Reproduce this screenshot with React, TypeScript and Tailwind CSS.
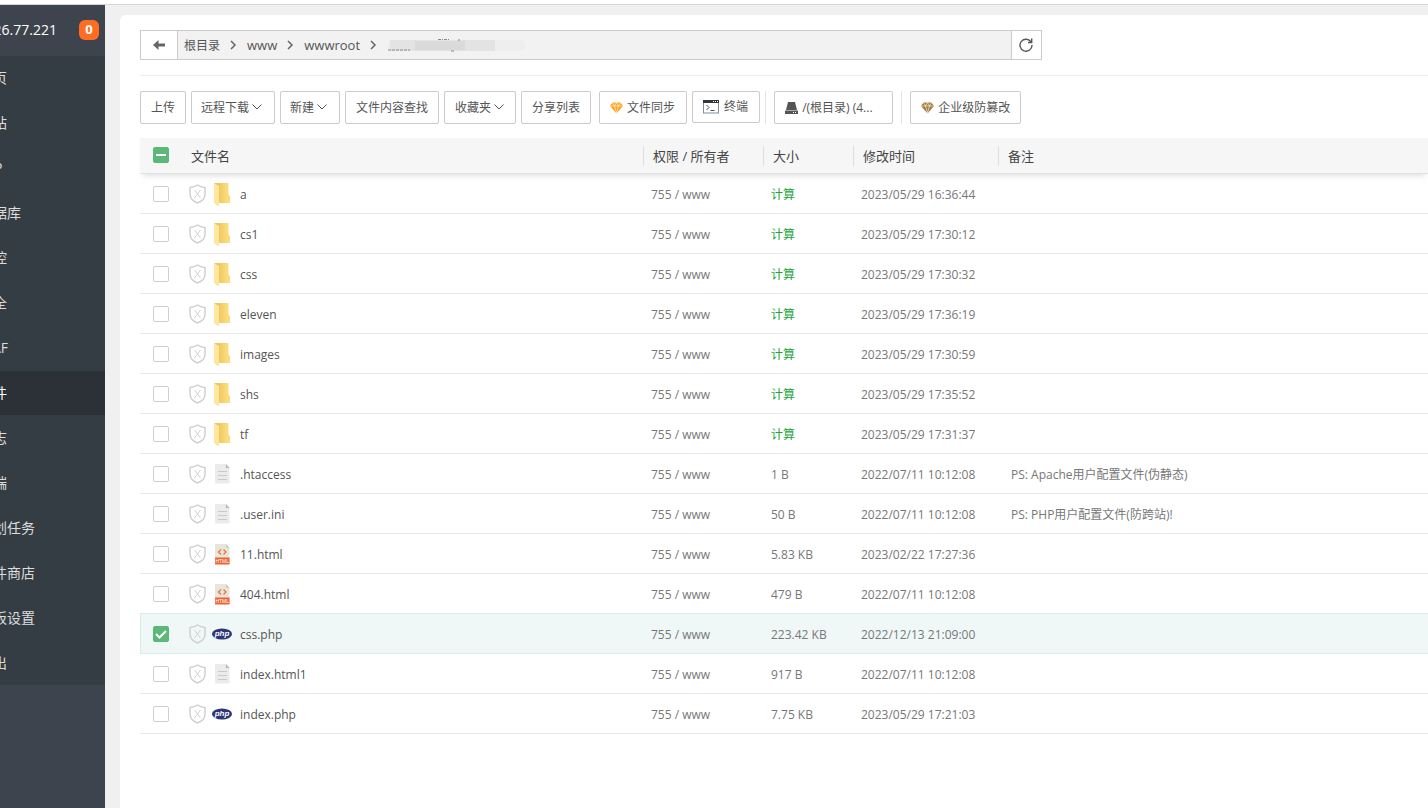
import type React from 'react';

type FileKind = 'folder' | 'text' | 'html' | 'php';

interface FileRow {
  name: string;
  kind: FileKind;
  size?: string;
  time: string;
  remark?: string;
  selected?: boolean;
}

const menu = [
  '首页', '网站', 'FTP', '数据库', '监控', '安全', 'WAF',
  '文件', '日志', '终端', '计划任务', '软件商店', '面板设置', '退出',
];

const files: FileRow[] = [
  { name: 'a', kind: 'folder', time: '2023/05/29 16:36:44' },
  { name: 'cs1', kind: 'folder', time: '2023/05/29 17:30:12' },
  { name: 'css', kind: 'folder', time: '2023/05/29 17:30:32' },
  { name: 'eleven', kind: 'folder', time: '2023/05/29 17:36:19' },
  { name: 'images', kind: 'folder', time: '2023/05/29 17:30:59' },
  { name: 'shs', kind: 'folder', time: '2023/05/29 17:35:52' },
  { name: 'tf', kind: 'folder', time: '2023/05/29 17:31:37' },
  { name: '.htaccess', kind: 'text', size: '1 B', time: '2022/07/11 10:12:08', remark: 'PS: Apache用户配置文件(伪静态)' },
  { name: '.user.ini', kind: 'text', size: '50 B', time: '2022/07/11 10:12:08', remark: 'PS: PHP用户配置文件(防跨站)!' },
  { name: '11.html', kind: 'html', size: '5.83 KB', time: '2023/02/22 17:27:36' },
  { name: '404.html', kind: 'html', size: '479 B', time: '2022/07/11 10:12:08' },
  { name: 'css.php', kind: 'php', size: '223.42 KB', time: '2022/12/13 21:09:00', selected: true },
  { name: 'index.html1', kind: 'text', size: '917 B', time: '2022/07/11 10:12:08' },
  { name: 'index.php', kind: 'php', size: '7.75 KB', time: '2023/05/29 17:21:03' },
];

const Shield: React.FC = () => (
  <svg width="17" height="20" viewBox="0 0 17 20" fill="none" stroke="#d0d0d0">
    <path d="M8.500 1C6.500 2.600 4 3.300 1 3.400V10c0 4.200 3 7.300 7.500 9 4.500-1.700 7.500-4.800 7.500-9V3.400C13 3.300 10.500 2.600 8.500 1Z" strokeWidth="1.500" strokeLinejoin="round" />
    <path d="m5.500 6 6 8M11.500 6l-6 8" strokeWidth="1" />
  </svg>
);

const FileIcon: React.FC<{ kind: FileKind }> = ({ kind }) => {
  if (kind === 'folder') {
    return (
      <svg width="20" height="24" viewBox="0 0 20 24">
        <defs>
          <linearGradient id="folderBack" x1="0" x2="1">
            <stop offset="0.200" stopColor="#ebc45c" />
            <stop offset="0.800" stopColor="#fbdb7c" />
          </linearGradient>
        </defs>
        <path d="M2 1h14.500v11.500l1.500 2v6.500H6Z" fill="url(#folderBack)" />
        <path d="M2 1l5 3v21l-5-4Z" fill="#ffe69c" />
      </svg>
    );
  }
  if (kind === 'php') {
    return (
      <svg width="20" height="12" viewBox="0 0 20 12">
        <ellipse cx="10" cy="6" rx="10" ry="5.600" fill="#2c3578" />
        <text x="10" y="8" textAnchor="middle" fontSize="8" fontWeight="bold" fontStyle="italic" fontFamily="Liberation Sans, sans-serif" fill="#fff">php</text>
      </svg>
    );
  }
  const html = kind === 'html';
  return (
    <svg width="16" height="22" viewBox="0 0 16 22">
      <path d="M1 1h11l3.500 4v15.500H1Z" fill={html ? '#e8e6da' : '#ebebeb'} />
      <path d="M12 1v4h3.500Z" fill={html ? '#cfcdbf' : '#b8b8b8'} />
      {html ? (
        <>
          <path d="M7 6.500 4.500 9 7 11.500M9.500 6.500 12 9l-2.500 2.500" fill="none" stroke="#ef6c3a" strokeWidth="1.200" />
          <rect x="1" y="14.500" width="14.500" height="7" fill="#ee6334" />
          <text x="8.250" y="20" textAnchor="middle" fontSize="5" fontFamily="Liberation Sans, sans-serif" fill="#fff">HTML</text>
        </>
      ) : (
        <path d="M4 8.500h9M4 12.500h9M4 16.500h9" stroke="#c9c9c9" />
      )}
    </svg>
  );
};

const Checkbox: React.FC<{ label: string; checked?: boolean; partial?: boolean }> = ({ label, checked, partial }) => (
  <label className="relative block size-4">
    <input
      type="checkbox"
      aria-label={label}
      defaultChecked={checked || partial}
      className="peer block size-4 appearance-none rounded-xs border border-[#cfcfcf] bg-white checked:border-[#5cb878] checked:bg-[#5cb878]"
    />
    <svg
      className="pointer-events-none absolute inset-0 hidden peer-checked:block"
      width="16" height="16" viewBox="0 0 16 16" fill="none" stroke="#fff" strokeWidth="2"
    >
      <path d={partial ? 'M3 8h10' : 'm3 8 3.500 3.500L13 5'} />
    </svg>
  </label>
);

const ToolButton: React.FC<{ children: React.ReactNode; arrow?: boolean; className?: string }> = ({
  children,
  arrow,
  className = 'h-[33px] px-[10px]',
}) => (
  <button
    type="button"
    className={`flex shrink-0 items-center rounded-xs border border-[#cbcbcb] bg-white text-xs whitespace-nowrap ${className}`}
  >
    {children}
    {arrow && (
      <svg className="ml-[3px]" width="10" height="7" viewBox="0 0 10 7" fill="none" stroke="#555">
        <path d="m.5.5 4.500 4.500L9.500.5" />
      </svg>
    )}
  </button>
);

const Diamond: React.FC<{ color: string }> = ({ color }) => (
  <svg className="mr-1" width="13" height="12" viewBox="0 0 13 12">
    <path d="M2.500.5h8L13 4 6.500 11.500 0 4Z" fill={color} />
    <path d="M0 4h13M4.500 4l2 7M8.500 4l-2 7M2.500.5l2 3.500 2-3.500 2 3.500 2-3.500" fill="none" stroke="#fff" strokeWidth=".6" />
  </svg>
);

const Crumb: React.FC<{ children: React.ReactNode }> = ({ children }) => (
  <>
    <a href="#" className="pt-0.5 text-[#555]">{children}</a>
    <svg className="mx-[10px]" width="7" height="10" viewBox="0 0 7 10" fill="none" stroke="#666" strokeWidth="1.500">
      <path d="m1 1 4 4-4 4" />
    </svg>
  </>
);

const HeadCell: React.FC<{ children: React.ReactNode }> = ({ children }) => (
  <th className="border-b border-[#e0e0e0] p-0 text-left font-normal">
    <div className="h-5 border-l border-[#dedede] pl-[9px] leading-5">{children}</div>
  </th>
);

const Sidebar: React.FC = () => (
  <aside className="w-[105px] shrink-0 overflow-hidden bg-[#3d444d] text-sm">
    <div className="flex h-[51px] items-center justify-end pr-[6px] pb-0.5 text-white">
      <span className="mr-[22px]">26.77.221</span>
      <span className="flex size-5 shrink-0 items-center justify-center rounded-md bg-[#ff6c22] text-[13px] font-bold">0</span>
    </div>
    <nav className="flex flex-col bg-[#353d44]">
      {menu.map((item) => (
        <a
          key={item}
          href="#"
          className={`mb-px block h-11 -indent-[21px] leading-11 whitespace-nowrap last:mb-0 ${
            item === '文件' ? 'bg-[#2c3138] text-white' : 'text-[#dcdcdc]'
          }`}
        >
          {item}
        </a>
      ))}
    </nav>
  </aside>
);

const PathBar: React.FC = () => (
  <div className="flex h-[30px] max-w-[902px] border border-[#cbcbcb]">
    <button type="button" aria-label="返回" className="flex w-[37px] items-center justify-center border-r border-[#cbcbcb]">
      <svg width="12" height="10" viewBox="0 0 12 10" fill="#666">
        <path d="M0 5 5.500 0v3.500H12v3H5.500V10Z" />
      </svg>
    </button>
    <div className="flex flex-1 items-center bg-[#f2f2f2] pl-[6px] text-[13px]">
      <Crumb><span className="block text-xs">根目录</span></Crumb>
      <Crumb>www</Crumb>
      <Crumb>wwwroot</Crumb>
      {/* masked site directory */}
      <svg width="140" height="18" viewBox="4 0 140 18">
        <rect x="4" y="4" width="138" height="11" rx="5" fill="#eeeeee" />
        <path d="M7 4h105v11H7Z" fill="#e3e3e3" />
        <path d="M32 5h50v9H32Z" fill="#dadada" />
        <path d="M5 14h22M55 3.500h5M61 3.500h5M68 15h4M75 4h2" stroke="#888" strokeDasharray="3 1" />
      </svg>
    </div>
    <button type="button" aria-label="刷新" className="flex w-[30px] items-center justify-center border-l border-[#cbcbcb] pr-px">
      <svg width="14" height="14" viewBox="0 0 14 14" fill="none" stroke="#555" strokeWidth="1.400">
        <path d="M12.200 4.200A6 6 0 1 0 13 7M12.700.5v4H9" />
      </svg>
    </button>
  </div>
);

const Toolbar: React.FC = () => (
  <div className="mt-[15px] flex gap-[5px]">
    <ToolButton>上传</ToolButton>
    <ToolButton arrow className="h-[33px] pr-3 pl-[9px]">远程下载</ToolButton>
    <ToolButton arrow className="h-[33px] pr-3 pl-[9px]">新建</ToolButton>
    <ToolButton>文件内容查找</ToolButton>
    <ToolButton arrow className="h-[33px] pr-[11px] pl-[10px]">收藏夹</ToolButton>
    <ToolButton>分享列表</ToolButton>
    <ToolButton className="ml-[3px] h-[33px] pr-[11px] pl-[10px]">
      <Diamond color="#ffa11a" />
      文件同步
    </ToolButton>
    <ToolButton className="h-8 pr-[11px] pl-[10px]">
      <svg className="mr-[5px]" width="16" height="14" viewBox="0 0 16 14" fill="none">
        <rect x=".5" y=".5" width="15" height="12.500" fill="#fff" stroke="#7d8f9d" />
        <path d="M0 0h16v3H0Z" fill="#30363b" />
        <path d="M10 1.500h1M12 1.500h1M14 1.500h1" stroke="#fff" />
        <path d="m3.500 5 2.500 2.500L3.500 10M7.500 10.500h4" stroke="#42505b" />
      </svg>
      终端
    </ToolButton>
    <div className="h-[33px] w-px bg-[#e6e6e6]" />
    <ToolButton className="ml-[3px] h-[33px] w-[119px] px-[10px]">
      <svg className="mr-1" width="13" height="12" viewBox="0 0 13 12">
        <path d="M3 0h7l2 8H1Z" fill="#555" />
        <path d="M0 8.500h13V12H0Z" fill="#555" />
        <path d="M8 10.500h1M10 10.500h1" stroke="#fff" />
      </svg>
      /(根目录) (4...
    </ToolButton>
    <div className="ml-[3px] h-[33px] w-px bg-[#e6e6e6]" />
    <ToolButton className="ml-[3px] h-[33px] px-[10px]">
      <Diamond color="#a5783c" />
      企业级防篡改
    </ToolButton>
  </div>
);

const FileTable: React.FC = () => (
  <table className="mt-[14px] w-full table-fixed border-separate border-spacing-0 text-xs text-[#777]">
    <colgroup>
      <col className="w-[41px]" />
      <col className="w-[462px]" />
      <col className="w-[120px]" />
      <col className="w-[90px]" />
      <col className="w-[145px]" />
      <col />
    </colgroup>
    <thead>
      <tr className="h-9 bg-[#f6f6f6] text-[13px] text-[#444] shadow-[0_5px_5px_-3px_rgba(0,0,0,0.12)]">
        <th className="border-b border-[#e0e0e0] p-0 pb-0.5 pl-[13px]">
          <Checkbox label="全选" partial />
        </th>
        <th className="border-b border-[#e0e0e0] p-0 pt-0.5 pl-[10px] text-left font-normal">文件名</th>
        <HeadCell>权限 / 所有者</HeadCell>
        <HeadCell>大小</HeadCell>
        <HeadCell>修改时间</HeadCell>
        <HeadCell>备注</HeadCell>
      </tr>
    </thead>
    <tbody>
      {files.map((file, i) => {
        const edge = file.selected || files[i + 1]?.selected;
        const cell = `border-b p-0 ${edge ? 'border-[#d9ece9]' : 'border-[#e8e8e8]'}`;
        return (
          <tr key={file.name} className={`h-10 ${file.selected ? 'bg-[#eff8f7]' : ''}`}>
            <td className={`${cell} ${file.selected ? 'border-l pl-3' : 'pl-[13px]'}`}>
              <Checkbox label={file.name} checked={file.selected} />
            </td>
            <td className={`${cell} pl-2`}>
              <div className="flex items-center">
                <Shield />
                <span className="ml-[6px] flex w-5 justify-center">
                  <FileIcon kind={file.kind} />
                </span>
                <a href="#" className="ml-2 pt-0.5 text-[#555]">{file.name}</a>
              </div>
            </td>
            <td className={`${cell} pt-0.5 pl-2`}>755 / www</td>
            <td className={`${cell} pt-0.5 pl-2`}>
              {file.size ?? <a href="#" className="text-[#20a53a]">计算</a>}
            </td>
            <td className={`${cell} pt-0.5 pl-2`}>{file.time}</td>
            <td className={`${cell} pt-0.5 pl-[13px]`}>{file.remark}</td>
          </tr>
        );
      })}
    </tbody>
  </table>
);

const App: React.FC = () => (
  <div className="flex min-h-screen flex-col overflow-hidden bg-[#f0f0f0] font-['Open_Sans','Noto_Sans_CJK_SC',sans-serif] text-[#555]">
    <div className="h-[5px] border-b border-[#d6d6d6] bg-white" />
    <div className="flex flex-1">
      <Sidebar />
      <main className="mt-[10px] ml-[15px] min-w-0 flex-1 rounded-tl-md bg-white pt-[15px] pl-5">
        <PathBar />
        <hr className="mt-[15px] border-[#ececec]" />
        <Toolbar />
        <FileTable />
      </main>
    </div>
  </div>
);

export default App;
